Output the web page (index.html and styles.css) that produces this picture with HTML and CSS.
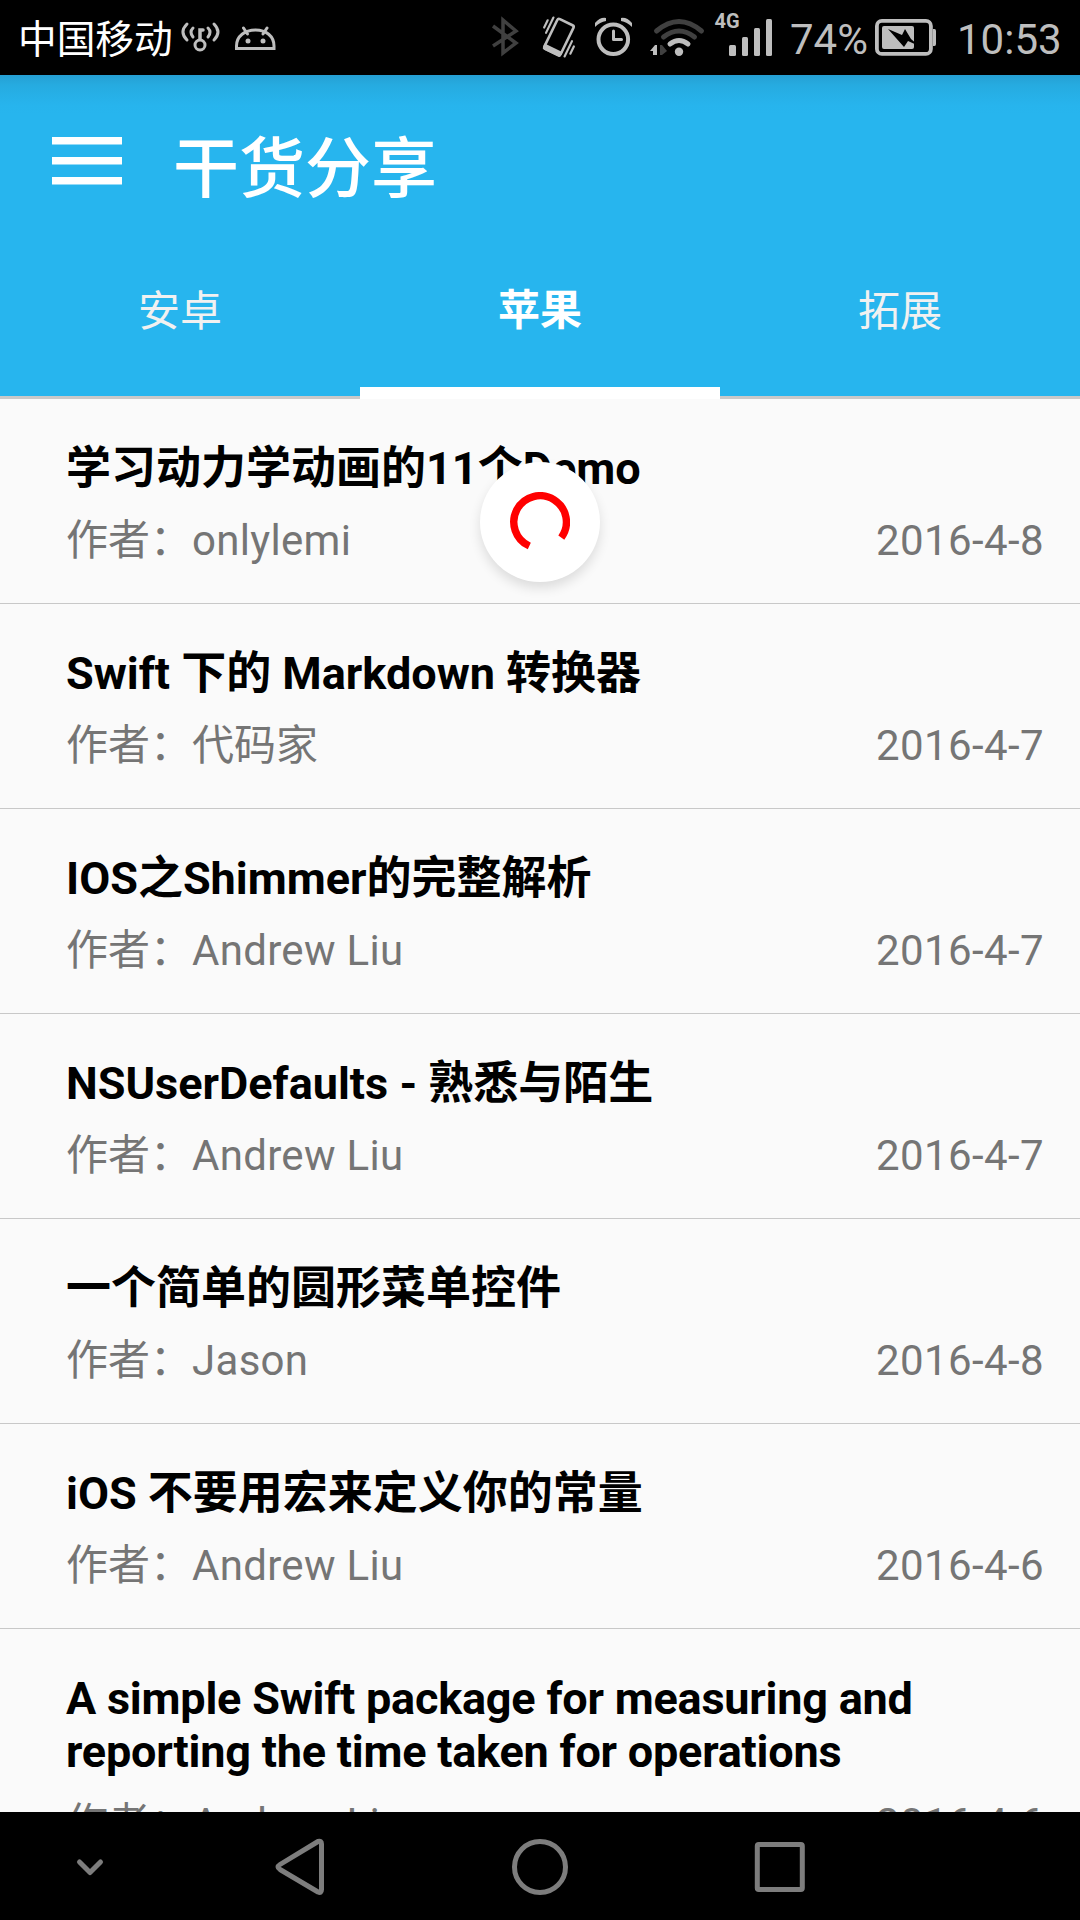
FILE: index.html
```html
<!DOCTYPE html>
<html lang="zh-CN">
<head>
<meta charset="utf-8">
<title>干货分享</title>
<link rel="stylesheet" href="styles.css">
</head>
<body>
<div class="screen">
  <div class="status-bar">
    <span class="carrier">中国移动</span>
    <svg class="status-left" width="110" height="75" viewBox="0 0 110 75" fill="none" stroke="#bebebe" stroke-width="3" stroke-linecap="round">
      <path d="M13 24Q5 32 13 40M19 28Q15 32 19 37M34 28Q38 32 34 37M40 24Q48 32 40 40"/>
      <circle cx="26" cy="45" r="5"/>
      <path d="M26 39V30h3" stroke-width="3.500"/>
      <path d="M62.500 48.500V46C62.500 36 71 30 81.500 30S100 36 100 46V48.500ZM69.500 28l4 6M93 28l-4 6"/>
      <circle cx="74" cy="41" r="2.500" fill="#bebebe" stroke="none"/><circle cx="89" cy="41" r="2.500" fill="#bebebe" stroke="none"/>
    </svg>
    <svg class="status-right" width="290" height="75" viewBox="490 0 290 75" fill="none" stroke="#bebebe">
      <path stroke="#404040" stroke-width="3.500" stroke-linejoin="miter" d="M493 26l23 17-13 10V20l13 11-23 15"/>
      <g transform="translate(559 37) rotate(26)">
        <rect x="-9" y="-16.500" width="18" height="33" rx="2" stroke-width="2.600"/>
        <path fill="#bebebe" stroke="none" d="M-10 12h20v4q0 2-2 2h-16q-2 0-2-2z"/>
        <path stroke-width="2.200" stroke-linecap="round" d="M-13.500-15v17M-17.500-10v8M13.500-2v17M17.500 2v8"/>
      </g>
      <circle cx="613.300" cy="39.300" r="14.800" stroke-width="4"/>
      <path stroke-width="3" stroke-linecap="round" stroke-linejoin="round" d="M613.500 31v8.500h8"/>
      <path fill="#bebebe" stroke="none" d="M595 27v-4q5-6 11-5v3q-6 1-11 6zM632 27v-4q-5-6-11-5v3q6 1 11 6z"/>
      <g stroke-linecap="round" stroke-width="5">
        <path stroke="#404040" d="M656.500 31Q679 12 701.500 31M663.500 37Q679 25 694.500 37"/>
        <path d="M670 44Q679 37 688 44"/>
      </g>
      <circle cx="679" cy="51.800" r="4.200" fill="#bebebe" stroke="none"/>
      <path fill="#bebebe" stroke="none" d="M650 51l5-6h2v10h-4v-4z"/>
      <path fill="#404040" stroke="none" d="M660 45h2l5 6-5 4h-2z"/>
      <text x="714.500" y="27.500" class="network">4G</text>
      <g fill="#bebebe" stroke="none"><rect x="729" y="45" width="7" height="11" rx="1.500"/><rect x="742" y="37" width="6" height="19" rx="1.500"/><rect x="754" y="28" width="6" height="28" rx="1.500"/><rect x="766" y="19" width="6" height="37" rx="1.500"/></g>
    </svg>
    <span class="percent">74%</span>
    <svg class="battery" width="62" height="75" viewBox="0 0 62 75">
      <rect x="1.900" y="20.900" width="54" height="33" rx="5" fill="none" stroke="#bebebe" stroke-width="3.800"/>
      <rect x="7" y="26" width="32" height="23" rx="2" fill="#bebebe"/>
      <path d="M58 29h1.500q1.500 0 1.500 2v13q0 2-1.500 2H58z" fill="#bebebe"/>
      <path d="M13 29l14 6 3-6 6 10 8 7-11-5-4 6z" fill="#000"/>
    </svg>
    <span class="clock">10:53</span>
  </div>
  <header class="header">
    <div class="toolbar">
      <svg class="menu" width="72" height="50" viewBox="0 0 72 50"><path fill="#fff" d="M1 1h70v7.500H1zM1 21h70v7.500H1zM1 41h70v7.500H1z"/></svg>
      <h1 class="heading">干货分享</h1>
    </div>
    <nav class="tabs">
      <a class="tab">安卓</a>
      <a class="tab active">苹果</a>
      <a class="tab">拓展</a>
    </nav>
  </header>
  <main class="list">
    <article class="item"><h2 class="title">学习动力学动画的11个Demo</h2><div class="meta"><span>作者：<span class="name">onlylemi</span></span><time>2016-4-8</time></div></article>
    <article class="item"><h2 class="title">Swift 下的 Markdown 转换器</h2><div class="meta"><span>作者：代码家</span><time>2016-4-7</time></div></article>
    <article class="item"><h2 class="title">IOS之Shimmer的完整解析</h2><div class="meta"><span>作者：<span class="name">Andrew Liu</span></span><time>2016-4-7</time></div></article>
    <article class="item"><h2 class="title">NSUserDefaults - 熟悉与陌生</h2><div class="meta"><span>作者：<span class="name">Andrew Liu</span></span><time>2016-4-7</time></div></article>
    <article class="item"><h2 class="title">一个简单的圆形菜单控件</h2><div class="meta"><span>作者：<span class="name">Jason</span></span><time>2016-4-8</time></div></article>
    <article class="item"><h2 class="title">iOS 不要用宏来定义你的常量</h2><div class="meta"><span>作者：<span class="name">Andrew Liu</span></span><time>2016-4-6</time></div></article>
    <article class="item"><h2 class="title long">A simple Swift package for measuring and<br>reporting the time taken for operations</h2><div class="meta"><span>作者：<span class="name">Andrew Liu</span></span><time>2016-4-6</time></div></article>
    <div class="spinner"><svg width="60" height="60" viewBox="0 0 60 60"><path d="M51.300 45.600A26.300 26.300 0 1 0 19.300 54" fill="none" stroke="#f00" stroke-width="7.400"/></svg></div>
  </main>
  <footer class="nav-bar">
    <svg width="1080" height="108" viewBox="0 0 1080 108" fill="none" stroke="#7d7d7d" stroke-width="5" stroke-linejoin="round" stroke-linecap="round">
      <path d="M79.500 50l10.500 10.500 10.500-10.500"/>
      <path d="M321.500 32v45.500q0 4-3.500 2.500L280 57.500q-4-2.500 0-5L318 29.500q3.500-1 3.500 2.500z"/>
      <circle cx="540" cy="55" r="25.500"/>
      <rect x="757.300" y="32.500" width="45" height="45" rx="1.500"/>
    </svg>
  </footer>
</div>
</body>
</html>
```
FILE: styles.css
```css
* { box-sizing: border-box; margin: 0; padding: 0; }
body { background: #000; font-family: Roboto, "Noto Sans CJK SC", sans-serif; }
.screen { width: 1080px; height: 1920px; display: flex; flex-direction: column; overflow: hidden; background: #fafafa; }
.status-bar { height: 75px; flex: none; display: flex; align-items: center; background: #000; color: #bebebe; padding-left: 18px; white-space: nowrap; }
.carrier { font-size: 38.700px; line-height: 75px; width: 156px; color: #fff; padding-top: 3px; }
.status-left { margin-right: 206px; }
.network { font: 700 20px Roboto, sans-serif; fill: #bebebe; stroke: none; }
.percent { font-size: 42px; width: 85px; margin-left: 10px; line-height: 75px; padding-top: 3px; }
.battery { flex: none; }
.clock { font-size: 42px; line-height: 75px; margin-left: 20px; padding-top: 3px; }
.header { height: 324px; flex: none; display: flex; flex-direction: column; color: #fff; background: linear-gradient(#259fd3, #26abe0 10px, #27b4ed 30px, #27b5ee 40px); border-bottom: 3px solid #c9c9c9; }
.toolbar { height: 173px; display: flex; align-items: center; padding-left: 51px; }
.menu { flex: none; margin: 0 50px 1px 0; }
.heading { font-size: 66px; line-height: 90px; font-weight: 500; padding-top: 16px; }
.tabs { height: 151px; flex: none; display: flex; margin-bottom: -3px; }
.tab { flex: 1; padding-top: 34px; text-align: center; font-size: 42px; line-height: 60px; color: #f1f1f1; }
.tab.active { color: #fff; font-weight: 700; padding-top: 33px; border-bottom: 12px solid #fff; }
.list { flex: 1; position: relative; overflow: hidden; background: #fafafa; }
.item { border-bottom: 1px solid #c8c8c8; padding: 43px 36px 33px 66px; }
.title { font-size: 45px; line-height: 53px; font-weight: 700; color: #000; white-space: nowrap; }
.title.long { letter-spacing: -.22px; }
.meta { display: flex; justify-content: space-between; padding-top: 17px; font-size: 42px; line-height: 58px; color: #757575; }
.name { letter-spacing: .3px; }
.meta time { letter-spacing: .4px; }
.spinner { position: absolute; left: 480px; top: 63px; width: 120px; height: 120px; border-radius: 50%; background: #fff; box-shadow: 0 6px 12px rgba(0, 0, 0, .12); display: flex; align-items: center; justify-content: center; }
.nav-bar { height: 108px; flex: none; background: #000; }
.nav-bar svg { display: block; }
```
